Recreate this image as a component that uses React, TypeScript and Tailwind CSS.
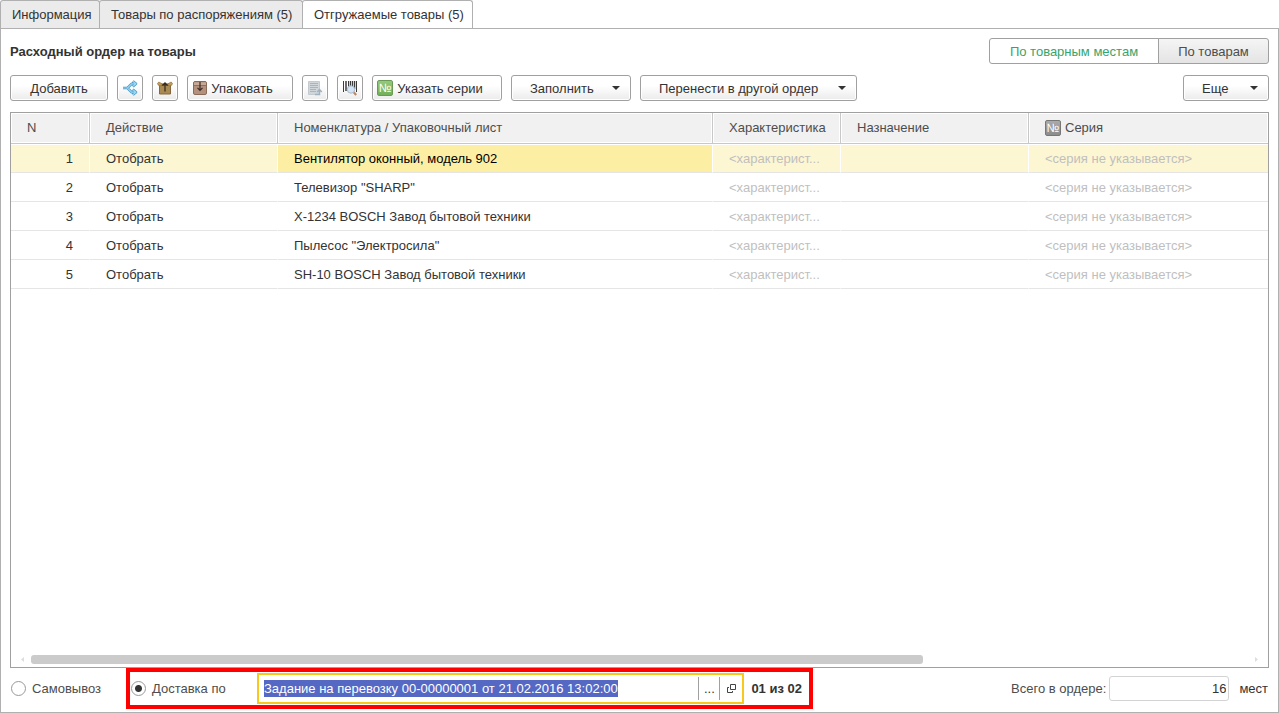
import { useEffect, useRef, useState } from "react";
import type { ReactNode } from "react";

const BUTTON =
  "flex h-[26px] shrink-0 items-center justify-center rounded-[3px] border border-[#a0a0a0] bg-linear-to-b from-white from-40% to-[#ebebeb] text-[#333] shadow-[inset_0_0_0_1px_#fff]";

const tabs = [
  { label: "Информация", width: "w-[100px]" },
  { label: "Товары по распоряжениям (5)", width: "w-[204px]" },
  { label: "Отгружаемые товары (5)", width: "w-[171px]" },
];

const rows = [
  "Вентилятор оконный, модель 902",
  'Телевизор "SHARP"',
  "X-1234 BOSCH Завод бытовой техники",
  'Пылесос "Электросила"',
  "SH-10 BOSCH Завод бытовой техники",
];

function SplitIcon() {
  return (
    <svg width="16" height="16" viewBox="0 0 16 16" fill="none" strokeLinejoin="round" aria-hidden="true">
      <path d="M1 8h4.500L9.500 3.800H13M5.500 8l4 4.200H13M10.800 1.200l3.200 2.600-3.200 2.600M10.800 9.600l3.200 2.600-3.200 2.600" stroke="#4796c4" strokeWidth="2.600" />
      <path d="M1 8h4.500L9.500 3.800H13M5.500 8l4 4.200H13M10.800 1.200l3.200 2.600-3.200 2.600M10.800 9.600l3.200 2.600-3.200 2.600" stroke="#9bd8f5" strokeWidth="1.200" />
    </svg>
  );
}

function UnpackIcon() {
  return (
    <svg width="16" height="16" viewBox="0 0 16 16" aria-hidden="true">
      <path d="M2.500 4h11v10h-11z" fill="#a98a54" stroke="#86683a" />
      <path d="M3 4h10v2H3z" fill="#80602f" />
      <path d="M.5 3.500 1.800 2 5.500 4 4 6 1.300 5.200zM15.500 3.500 14.200 2 10.500 4 12 6l2.700-.8z" fill="#c29b57" stroke="#94733d" strokeWidth=".7" />
      <path d="M8 11.500V3M5.500 5.500 8 2.800l2.500 2.700" fill="none" stroke="#33281a" strokeWidth="1.200" />
    </svg>
  );
}

function PackIcon() {
  return (
    <svg width="14" height="14" viewBox="0 0 14 14" aria-hidden="true">
      <rect x=".5" y=".5" width="13" height="13" rx="1.500" fill="#b3917c" stroke="#8a6a58" />
      <path d="M1 1.500h12V4H1z" fill="#c7aa9a" />
      <path d="M1 4.500h12" stroke="#8f705e" />
      <path d="M7 1v8M4.500 6.800 7 9.300l2.500-2.500" fill="none" stroke="#3b2b22" strokeWidth="1.200" />
    </svg>
  );
}

function DocumentIcon() {
  return (
    <svg width="16" height="16" viewBox="0 0 16 16" fill="none" aria-hidden="true">
      <path d="M1.500 1.500h11v13h-11z" fill="#d0d6da" stroke="#c3cbd0" />
      <path d="M3 3.500h8M3 5.500h8M3 7.500h8M3 9.500h6M3 11.500h6" stroke="#a9b5be" />
      <path d="M8 14.500h4.500v-4M10.200 12l2.300-2.500 2.300 2.500" stroke="#9fb2bf" strokeWidth="1.500" />
    </svg>
  );
}

function BarcodeIcon() {
  return (
    <svg width="16" height="16" viewBox="0 0 16 16" fill="none" aria-hidden="true">
      <path d="M1.500 1v11M6.500 1v10M10.500 1v8M14.500 1v11" stroke="#3c3c3c" />
      <path d="M4 1v10M8.500 1v6M12.500 1v8" stroke="#3c3c3c" strokeWidth="1.500" />
      <path d="m11.500 12 2.700 3" stroke="#b98a68" strokeWidth="2.200" />
      <circle cx="9" cy="9.500" r="3.700" fill="#d3e4f4" stroke="#a9b9cc" />
    </svg>
  );
}

function NumberIcon({ tone }: { tone: "green" | "gray" }) {
  return (
    <span
      aria-hidden="true"
      className={
        tone === "green"
          ? "flex size-4 items-center justify-center rounded-[2px] border border-[#6b9a58] bg-linear-to-b from-[#93c97c] to-[#73b05a] text-[12px] leading-none font-normal text-white"
          : "flex size-4 items-center justify-center rounded-[2px] border border-[#777] bg-linear-to-b from-[#aaa] to-[#8c8c8c] text-[12px] leading-none font-normal text-white"
      }
    >
      №
    </span>
  );
}

function Caret() {
  return (
    <svg width="8" height="4" viewBox="0 0 8 4" className="ml-auto" aria-hidden="true">
      <path d="M0 0h8L4 4z" fill="#333" />
    </svg>
  );
}

function Tab({ active, width, children, onClick }: { active: boolean; width: string; children: ReactNode; onClick: () => void }) {
  const base = `${width} shrink-0 -ml-px rounded-t-[3px] border border-b-0 border-[#b0b0b0] px-[11px] text-left leading-4 whitespace-nowrap first:ml-0`;
  return (
    <button
      type="button"
      role="tab"
      aria-selected={active}
      onClick={onClick}
      className={active ? `${base} -mb-px h-[29px] bg-white` : `${base} h-7 bg-[#ebebeb]`}
    >
      {children}
    </button>
  );
}

function Head({ children }: { children: ReactNode }) {
  return (
    <th className="h-[31px] border-r border-b border-[#c8c8c8] px-4 text-left leading-4 font-normal text-[#4d4d4d] shadow-[inset_0_0_0_1px_#fff] last:border-r-0">
      {children}
    </th>
  );
}

export default function App() {
  const [tab, setTab] = useState(2);
  const [delivery, setDelivery] = useState("task");
  const [task, setTask] = useState("Задание на перевозку 00-00000001 от 21.02.2016 13:02:00");
  const [total, setTotal] = useState("16");
  const taskRef = useRef<HTMLInputElement>(null);

  useEffect(() => {
    taskRef.current?.focus();
    taskRef.current?.select();
  }, []);

  const radio =
    "size-[15px] shrink-0 appearance-none rounded-full border border-[#999] bg-white checked:bg-[radial-gradient(circle,#333_0_3px,#fff_4px)]";

  return (
    <div className="flex min-h-screen flex-col bg-white font-['Liberation_Sans',Arial,sans-serif] text-[13px] leading-[17px] text-[#333]">
      <div role="tablist" className="flex h-7 shrink-0">
        {tabs.map(({ label, width }, i) => (
          <Tab key={label} width={width} active={tab === i} onClick={() => setTab(i)}>
            {label}
          </Tab>
        ))}
      </div>

      <main className="flex grow flex-col border border-[#b0b0b0]">
        <header className="flex items-center justify-between px-[9px] pt-[9px]">
          <h1 className="font-bold">Расходный ордер на товары</h1>
          <div className="flex">
            <button type="button" className="h-[26px] w-[170px] rounded-l-[3px] border border-[#a0a0a0] text-[#36a56b]">
              По товарным местам
            </button>
            <button type="button" className="-ml-px h-[26px] w-[111px] rounded-r-[3px] border border-[#a0a0a0] bg-linear-to-b from-[#f5f5f5] to-[#e4e4e4] text-[#4d4d4d]">
              По товарам
            </button>
          </div>
        </header>

        <div className="mt-[11px] flex gap-[9px] px-[9px]">
          <button type="button" className={`${BUTTON} w-[98px]`}>Добавить</button>
          <button type="button" aria-label="Разбить строку" className={`${BUTTON} w-[26px]`}><SplitIcon /></button>
          <button type="button" aria-label="Распаковать" className={`${BUTTON} w-[26px]`}><UnpackIcon /></button>
          <button type="button" className={`${BUTTON} w-[106px] gap-1 pr-3.5`}><PackIcon />Упаковать</button>
          <button type="button" aria-label="Документ" className={`${BUTTON} w-[26px]`}><DocumentIcon /></button>
          <button type="button" aria-label="Поиск по штрихкоду" className={`${BUTTON} w-[26px]`}><BarcodeIcon /></button>
          <button type="button" className={`${BUTTON} w-[130px] gap-1 pr-3.5`}><NumberIcon tone="green" />Указать серии</button>
          <button type="button" className={`${BUTTON} w-[120px] pr-2.5 pl-[18px]`}>Заполнить<Caret /></button>
          <button type="button" className={`${BUTTON} w-[217px] pr-2.5 pl-[18px]`}>Перенести в другой ордер<Caret /></button>
          <button type="button" className={`${BUTTON} ml-auto w-[86px] pr-2.5 pl-[18px]`}>Еще<Caret /></button>
        </div>

        <section className="mx-[9px] mt-[11px] flex grow flex-col border border-[#a0a0a0]">
          <table className="w-full table-fixed border-separate border-spacing-0">
            <colgroup>
              <col className="w-[79px]" />
              <col className="w-[188px]" />
              <col className="w-[435px]" />
              <col className="w-[128px]" />
              <col className="w-[188px]" />
              <col />
            </colgroup>
            <thead className="bg-[#f1f1f1]">
              <tr>
                <Head>N</Head>
                <Head>Действие</Head>
                <Head>Номенклатура / Упаковочный лист</Head>
                <Head>Характеристика</Head>
                <Head>Назначение</Head>
                <Head>
                  <span className="flex items-center gap-1"><NumberIcon tone="gray" />Серия</span>
                </Head>
              </tr>
            </thead>
            <tbody>
              {rows.map((name, i) => (
                <tr
                  key={name}
                  className="*:h-[29px] *:border-r *:border-b *:border-r-white *:border-b-[#e5e5e5] *:px-4 *:pt-px *:shadow-[inset_0_1px_0_#fff] *:last:border-r-0 first:bg-[#fdf6d3]"
                >
                  <td className="text-right">{i + 1}</td>
                  <td>Отобрать</td>
                  <td className={i === 0 ? "bg-[#fcefa4] text-black" : ""}>{name}</td>
                  <td className="text-[#bfbfbf]">&lt;характерист...</td>
                  <td />
                  <td className="text-[#bfbfbf]">&lt;серия не указывается&gt;</td>
                </tr>
              ))}
            </tbody>
          </table>
          <div className="mt-auto mb-[3px] flex h-[9px] items-center px-2.5">
            <svg width="3" height="5" viewBox="0 0 3 5" aria-hidden="true"><path d="M3 0v5L0 2.500z" fill="#ddd" /></svg>
            <div className="mx-[7px] h-[9px] grow">
              <div className="h-full w-11/15 rounded-[3px] bg-[#cbcbcb]" />
            </div>
            <svg width="3" height="5" viewBox="0 0 3 5" aria-hidden="true"><path d="M0 0v5l3-2.500z" fill="#ddd" /></svg>
          </div>
        </section>

        <footer className="mb-[3px] flex items-center px-2.5 text-[#4d4d4d]">
          <label className="flex w-[115px] items-center gap-1.5">
            <input type="radio" name="delivery" className={radio} checked={delivery === "self"} onChange={() => setDelivery("self")} />
            Самовывоз
          </label>
          <div className="flex h-[41px] w-[687px] items-center border-4 border-[#f00] pr-[7px] pl-px">
            <label className="flex w-[126px] items-center gap-1.5">
              <input type="radio" name="delivery" className={radio} checked={delivery === "task"} onChange={() => setDelivery("task")} />
              Доставка по
            </label>
            <div className="flex h-[31px] grow items-center border-2 border-[#f8c81c]">
              <input
                ref={taskRef}
                aria-label="Задание на перевозку"
                value={task}
                onChange={(e) => setTask(e.target.value)}
                className="h-[17px] min-w-0 grow px-[5px] text-[#333] outline-none selection:bg-[#5468c4] selection:text-white"
              />
              <button type="button" aria-label="Выбрать" className="h-[23px] w-[21px] shrink-0 border-l border-[#a0a0a0] text-[#333]">...</button>
              <button type="button" aria-label="Открыть" className="flex h-[23px] w-[23px] shrink-0 items-center justify-center border-l border-[#a0a0a0]">
                <svg width="9" height="9" viewBox="0 0 9 9" fill="none" stroke="#444" className="shrink-0" aria-hidden="true">
                  <path d="M3.500.5h5v5h-5zM2 3.500H.5v5h5V7" />
                </svg>
              </button>
            </div>
            <strong className="ml-[7px] text-[#333]">01 из 02</strong>
          </div>
          <label htmlFor="total" className="ml-auto">Всего в ордере:</label>
          <input
            id="total"
            value={total}
            onChange={(e) => setTotal(e.target.value)}
            className="ml-[3px] h-[25px] w-[120px] rounded-[3px] border border-[#d3d3d3] px-0.5 text-right text-[#333] outline-none"
          />
          <span className="ml-2.5 text-[#333]">мест</span>
        </footer>
      </main>
    </div>
  );
}
